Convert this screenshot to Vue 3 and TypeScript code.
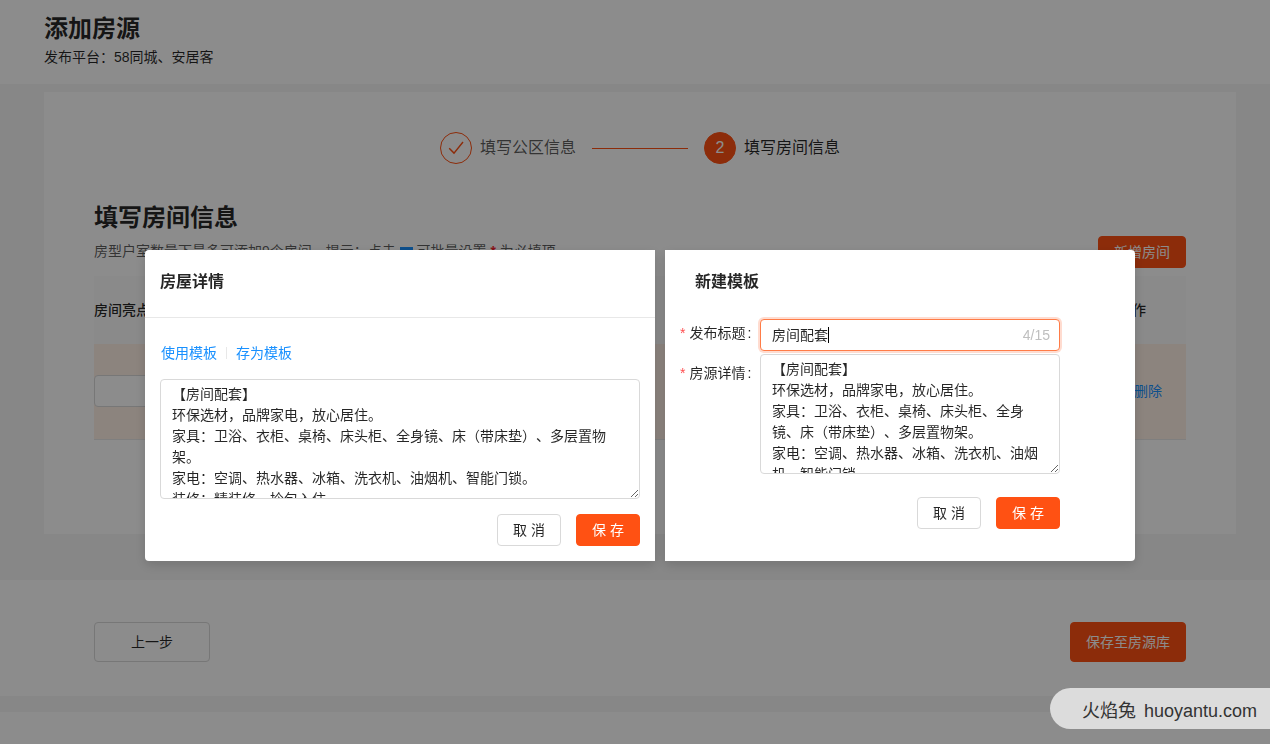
<script setup lang="ts">
import { computed, ref } from 'vue'

const detail = ref<string>(
  [
    '【房间配套】',
    '环保选材，品牌家电，放心居住。',
    '家具：卫浴、衣柜、桌椅、床头柜、全身镜、床（带床垫）、多层置物架。',
    '家电：空调、热水器、冰箱、洗衣机、油烟机、智能门锁。',
    '装修：精装修，拎包入住。',
  ].join('\n'),
)
const templateDetail = ref<string>(detail.value)
const templateTitle = ref<string>('房间配套')
const highlight = ref<string>('')
const titleMax = 15
const counter = computed(() => `${templateTitle.value.length}/${titleMax}`)
</script>

<template>
  <div class="page">
    <header class="page-header">
      <h1>添加房源</h1>
      <p>发布平台：58同城、安居客</p>
    </header>

    <main class="main">
      <section class="card">
        <ol class="steps">
          <li class="step done">
            <span class="dot">
              <svg width="16" height="16" viewBox="0 0 16 16" aria-hidden="true">
                <path d="M1.2 8.2 L6 13.1 L15 2" fill="none" stroke="currentColor" stroke-width="1.4" />
              </svg>
            </span>
            <span>填写公区信息</span>
          </li>
          <li class="step-line" aria-hidden="true"></li>
          <li class="step active">
            <span class="dot">2</span>
            <span>填写房间信息</span>
          </li>
        </ol>

        <h2>填写房间信息</h2>
        <div class="hint-row">
          <p class="hint">
            房型户室数量下最多可添加9个房间，提示：点击
            <svg class="hint-icon" width="13" height="9" viewBox="0 0 13 9" aria-hidden="true">
              <rect width="13" height="9" fill="#1890ff" />
            </svg>
            可批量设置 <b class="star">*</b> 为必填项
          </p>
          <button type="button" class="btn primary add">新增房间</button>
        </div>

        <table class="rooms">
          <thead>
            <tr>
              <th>房间亮点</th>
              <th class="op">操作</th>
            </tr>
          </thead>
          <tbody>
            <tr>
              <td><input v-model="highlight" class="cell-input" type="text" aria-label="房间亮点" /></td>
              <td class="op"><a href="#">删除</a></td>
            </tr>
          </tbody>
        </table>
      </section>
    </main>

    <div class="page-actions">
      <button type="button" class="btn large">上一步</button>
      <button type="button" class="btn primary large">保存至房源库</button>
    </div>
    <div class="page-end"></div>

    <div class="mask">
      <section class="dialog dialog-detail" role="dialog" aria-labelledby="detail-title">
        <h3 id="detail-title">房屋详情</h3>
        <div class="dialog-body">
          <nav class="links">
            <a href="#">使用模板</a>
            <i class="divider"></i>
            <a href="#">存为模板</a>
          </nav>
          <textarea v-model="detail" class="area" aria-label="房屋详情"></textarea>
          <div class="buttons">
            <button type="button" class="btn">取 消</button>
            <button type="button" class="btn primary">保 存</button>
          </div>
        </div>
      </section>

      <form class="dialog dialog-template" role="dialog" aria-labelledby="tpl-title" @submit.prevent>
        <h3 id="tpl-title">新建模板</h3>
        <div class="field">
          <label for="tpl-name"><span class="req">*</span>发布标题<span class="colon">:</span></label>
          <div class="text-box">
            <input id="tpl-name" v-model="templateTitle" type="text" :maxlength="titleMax" />
            <span class="caret"></span>
            <span class="count">{{ counter }}</span>
          </div>
        </div>
        <div class="field">
          <label for="tpl-detail"><span class="req">*</span>房源详情<span class="colon">:</span></label>
          <textarea id="tpl-detail" v-model="templateDetail" class="area"></textarea>
        </div>
        <div class="buttons">
          <button type="button" class="btn">取 消</button>
          <button type="submit" class="btn primary">保 存</button>
        </div>
      </form>
    </div>

    <div class="watermark"><span>火焰兔</span><span>huoyantu.com</span></div>
  </div>
</template>

<style>
html,
body,
#app {
  height: 100%;
  margin: 0;
}
</style>

<style scoped>
* {
  box-sizing: border-box;
}

.page {
  display: flex;
  flex-direction: column;
  min-height: 100%;
  background: #f6f6f6;
  color: rgba(0, 0, 0, 0.85);
  font-family: 'Liberation Sans', 'Noto Sans CJK SC', sans-serif;
  font-size: 14px;
  line-height: 22px;
  text-spacing-trim: space-all;
}

h1,
h2,
h3,
p,
ol {
  margin: 0;
  padding: 0;
}

a {
  color: #1890ff;
  text-decoration: none;
}

.page-header {
  padding: 13px 44px 16px;
  background: #fff;
}

h1,
h2 {
  font-size: 24px;
  font-weight: 700;
  line-height: 32px;
}

.page-header p {
  margin-top: 1px;
}

.main {
  padding: 8px 34px 46px 44px;
}

.card {
  padding: 40px 50px 94px;
  background: #fff;
}

.steps {
  display: flex;
  align-items: center;
  justify-content: center;
  gap: 16px;
  margin-bottom: 38px;
  list-style: none;
  font-size: 16px;
}

.step {
  display: flex;
  align-items: center;
  gap: 8px;
  line-height: 32px;
}

.step.done {
  color: rgba(0, 0, 0, 0.65);
}

.dot {
  display: flex;
  align-items: center;
  justify-content: center;
  width: 32px;
  height: 32px;
  border: 1px solid #ff5113;
  border-radius: 50%;
  color: #ff5113;
}

.active .dot {
  background: #ff5113;
  color: #fff;
}

.step-line {
  width: 96px;
  height: 1px;
  background: #ff5113;
}

.hint-row {
  display: flex;
  align-items: flex-start;
  justify-content: space-between;
  margin-top: 2px;
}

.hint {
  color: rgba(0, 0, 0, 0.65);
  line-height: 30px;
}

.star {
  color: #f5222d;
}

.btn {
  min-width: 64px;
  height: 32px;
  padding: 0 15px;
  border: 1px solid #d9d9d9;
  border-radius: 4px;
  background: #fff;
  color: rgba(0, 0, 0, 0.85);
  font: inherit;
  white-space: nowrap;
}

.btn.primary {
  border-color: #ff5113;
  background: #ff5113;
  color: #fff;
}

.btn.large {
  min-width: 116px;
  height: 40px;
}

.rooms {
  width: 100%;
  margin-top: 8px;
  border-collapse: collapse;
}

.rooms th {
  height: 68px;
  padding: 0;
  background: #fcfcfc;
  font-weight: 500;
  text-align: left;
}

.rooms td {
  height: 95px;
  padding: 0;
  border-bottom: 1px solid #e8e8e8;
  background: #fff0e6;
}

.rooms th.op {
  padding-right: 40px;
  text-align: right;
}

.rooms td.op {
  padding-right: 24px;
  text-align: right;
}

.cell-input {
  display: block;
  width: 200px;
  height: 32px;
  border: 1px solid #d9d9d9;
  border-radius: 4px;
  background: #fff;
  font: inherit;
}

.page-actions {
  display: flex;
  justify-content: space-between;
  padding: 42px 84px 34px 94px;
  background: #fff;
}

.page-end {
  flex: 1;
  margin-top: 16px;
  background: #fff;
}

.mask {
  position: fixed;
  inset: 0;
  display: flex;
  align-items: flex-start;
  justify-content: center;
  gap: 10px;
  padding: 250px 0 0 10px;
  background: rgba(0, 0, 0, 0.45);
}

.dialog {
  background: #fff;
  box-shadow: 0 4px 12px rgba(0, 0, 0, 0.15);
}

.dialog h3 {
  font-size: 16px;
  font-weight: 700;
  line-height: 24px;
}

.dialog-detail {
  flex: 0 1 510px;
  border-radius: 4px 0 0 4px;
}

.dialog-detail h3 {
  padding: 20px 15px 23px;
  border-bottom: 1px solid #e8e8e8;
}

.dialog-body {
  padding: 24px 15px 15px;
}

.links {
  display: flex;
  align-items: center;
  margin-bottom: 15px;
  padding-left: 1px;
}

.divider {
  width: 1px;
  height: 12px;
  margin: 0 9px;
  background: #e8e8e8;
}

.area {
  display: block;
  width: 100%;
  height: 120px;
  padding: 4px 11px;
  overflow: hidden;
  border: 1px solid #d9d9d9;
  border-radius: 4px;
  background: #fff;
  color: rgba(0, 0, 0, 0.85);
  font: inherit;
  line-height: 21px;
  text-spacing-trim: space-all;
  resize: vertical;
}

.buttons {
  display: flex;
  justify-content: flex-end;
  gap: 15px;
  margin-top: 15px;
}

.dialog-template {
  flex: 0 1 470px;
  padding: 20px 75px 32px 15px;
  border-radius: 0 4px 4px 0;
}

.dialog-template h3 {
  margin-bottom: 25px;
  padding-left: 15px;
}

.field {
  display: flex;
  align-items: flex-start;
  margin-bottom: 3px;
}

.field label {
  flex: 0 0 80px;
  padding-top: 3px;
  white-space: nowrap;
}

.field + .field label {
  padding-top: 8px;
}

.req {
  margin-right: 4px;
  color: #ff4d4f;
}

.colon {
  margin-left: 2px;
}

.text-box {
  display: flex;
  flex: 1;
  align-items: center;
  height: 32px;
  padding: 0 9px 0 11px;
  border: 1px solid #ff7c47;
  border-radius: 4px;
  background: #fff;
  box-shadow: 0 0 0 2px rgba(255, 81, 19, 0.2);
}

.text-box input {
  min-width: 0;
  padding: 0;
  border: 0;
  outline: 0;
  background: transparent;
  color: rgba(0, 0, 0, 0.85);
  caret-color: transparent;
  font: inherit;
  field-sizing: content;
}

.caret {
  width: 1px;
  height: 16px;
  background: #000;
}

.count {
  margin-left: auto;
  color: #bfbfbf;
}

.dialog-template .buttons {
  margin-top: 23px;
}

.watermark {
  position: fixed;
  right: 0;
  bottom: 15px;
  display: flex;
  align-items: center;
  gap: 8px;
  height: 41px;
  padding: 4px 13px 0 32px;
  border-radius: 21px 0 0 21px;
  background: #dcdcdc;
  color: #333;
  font-size: 18px;
}
</style>
